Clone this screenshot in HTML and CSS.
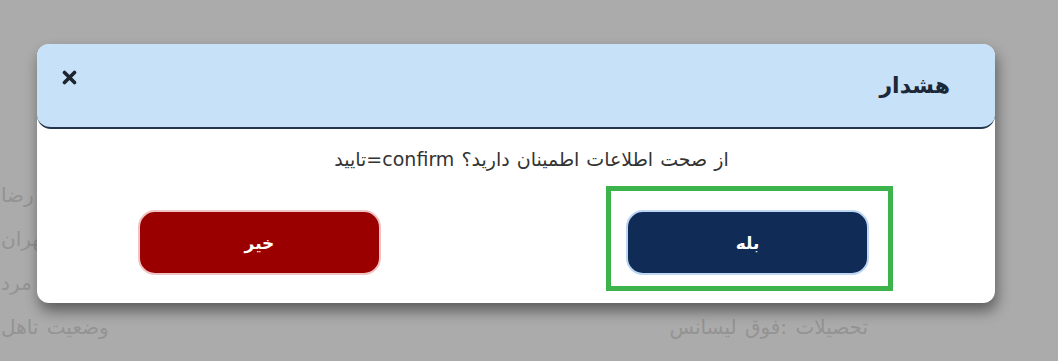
FILE: index.html
```html
<!DOCTYPE html>
<html lang="fa" dir="rtl">
<head>
<meta charset="utf-8">
<link rel="stylesheet" href="styles.css">
</head>
<body>
<div class="page">
  <div class="col col-right">
    <p class="line">تحصیلات :فوق لیسانس</p>
  </div>
  <div class="col col-left">
    <p class="line">نام رضا</p>
    <p class="line">محل تولد تهران</p>
    <p class="line">جنسیت مرد</p>
    <p class="line">وضعیت تاهل</p>
  </div>
</div>

<div class="dialog">
  <div class="dialog-header">
    <h2 class="dialog-title">هشدار</h2>
    <span class="dialog-close" aria-label="close">
      <svg width="15" height="15" viewBox="0 0 15 15"><path d="M2.5 2.5 L12.5 12.5 M12.5 2.5 L2.5 12.5" stroke="#1d2430" stroke-width="3.6" stroke-linecap="round"/></svg>
    </span>
  </div>
  <div class="dialog-body">
    <p class="message">از صحت اطلاعات اطمینان دارید؟ confirm=تایید</p>
    <div class="actions">
      <div class="yes-wrap"><button class="btn btn-yes">بله</button></div>
      <button class="btn btn-no">خیر</button>
    </div>
  </div>
</div>
</body>
</html>
```

FILE: styles.css
```css
* { box-sizing: border-box; }
html, body {
  margin: 0;
  height: 100%;
}
body {
  background: #ababab;
  font-family: "DejaVu Sans", "Noto Sans", sans-serif;
  overflow: hidden;
}
.page {
  display: flex;
  justify-content: space-between;
  align-items: stretch;
  padding: 182px 190px 0 1px;
}
.col { display: flex; flex-direction: column; gap: 18px; }
.col-right { text-align: right; justify-content: flex-end; }
.col-left { text-align: left; }
.line {
  margin: 0;
  font-size: 20px;
  line-height: 26px;
  color: #939393;
  word-spacing: 2px;
}
.dialog {
  position: absolute;
  left: 37px;
  top: 44px;
  width: 958px;
  height: 259px;
  background: #ffffff;
  border-radius: 12px;
  box-shadow: 2px 8px 14px rgba(0, 0, 0, 0.45);
}
.dialog-header {
  position: relative;
  height: 85px;
  background: #c6e1f8;
  border-bottom: 2px solid #24364d;
  border-radius: 12px 12px 14px 14px;
  display: flex;
  align-items: center;
  padding: 0 45px 0 25px;
}
.dialog-title {
  margin: 0;
  font-size: 22px;
  font-weight: bold;
  color: #1c2738;
  flex: 1;
  text-align: right;
}
.dialog-close {
  display: block;
  align-self: flex-start;
  margin-top: 26px;
  width: 15px;
  height: 15px;
}
.dialog-close svg { display: block; }
.dialog-body {
  padding: 17px 126px 0 101px;
}
.message {
  margin: 0;
  text-align: center;
  font-size: 19px;
  line-height: 26px;
  color: #333333;
  padding-left: 56px;
  word-spacing: 1px;
}
.actions {
  margin-top: 38px;
  display: flex;
  justify-content: space-between;
}
.yes-wrap { position: relative; }
.yes-wrap::after {
  content: "";
  position: absolute;
  top: -24px;
  right: -24px;
  bottom: -16px;
  left: -20px;
  border: 5px solid #3cb44b;
  pointer-events: none;
}
.btn {
  display: block;
  width: 243px;
  height: 65px;
  border-radius: 17px;
  font-family: inherit;
  font-size: 17px;
  font-weight: bold;
  color: #ffffff;
  cursor: pointer;
}
.btn-yes {
  background: #0f2b56;
  border: 2px solid #bcd6f3;
}
.btn-no {
  background: #9b0000;
  border: 2px solid #f0c4c4;
}
```
